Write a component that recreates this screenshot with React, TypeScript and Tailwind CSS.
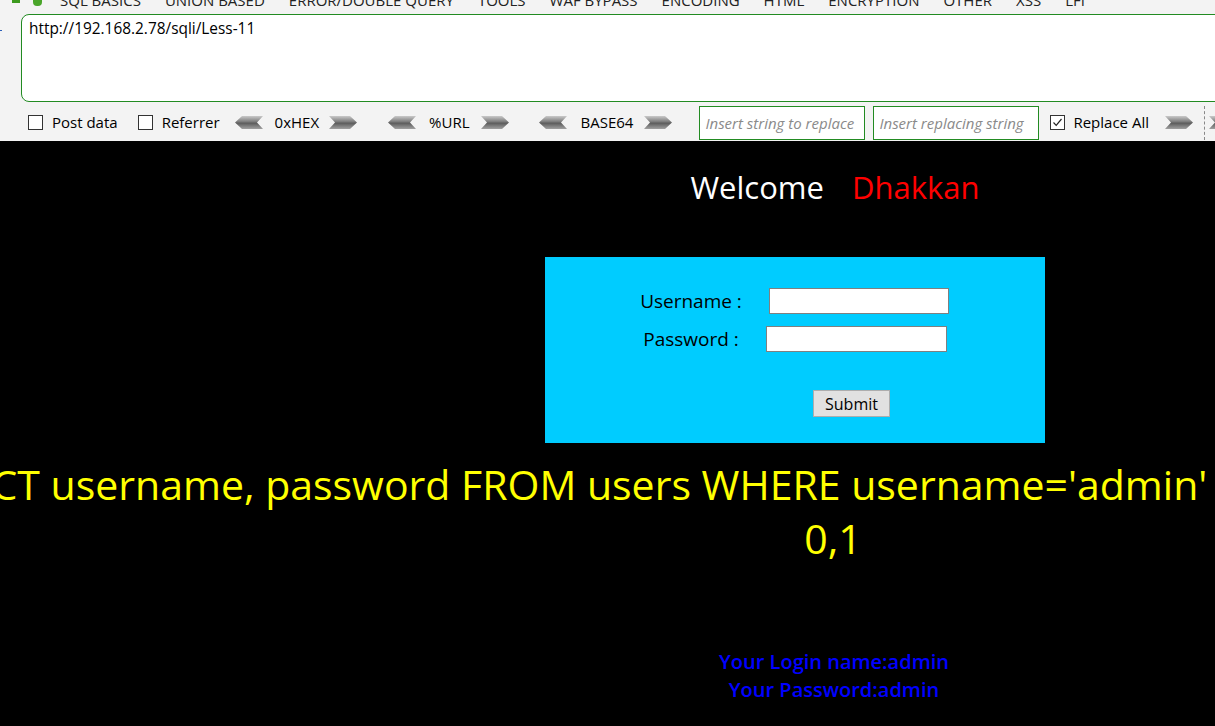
import React from "react";

const menu = [
  "SQL BASICS",
  "UNION BASED",
  "ERROR/DOUBLE QUERY",
  "TOOLS",
  "WAF BYPASS",
  "ENCODING",
  "HTML",
  "ENCRYPTION",
  "OTHER",
  "XSS",
  "LFI",
];

function Arrow({ dir }: { dir: "left" | "right" }) {
  const id = `g-${dir}`;
  const pts =
    dir === "left"
      ? "0,6.5 7,0 28,0 22,6.5 28,13 7,13"
      : "0,0 21,0 28,6.5 21,13 0,13 6,6.5";
  return (
    <svg width="28" height="13" viewBox="0 0 28 13" className="shrink-0">
      <defs>
        <linearGradient id={id} x1="0" y1="0" x2="0" y2="1">
          <stop offset="0" stopColor="#c9c9c9" />
          <stop offset="0.45" stopColor="#7a7a7a" />
          <stop offset="0.55" stopColor="#5c5c5c" />
          <stop offset="1" stopColor="#a0a0a0" />
        </linearGradient>
      </defs>
      <polygon points={pts} fill={`url(#${id})`} />
    </svg>
  );
}

function Check({ checked }: { checked?: boolean }) {
  return (
    <span className="w-[15px] h-[15px] border border-[#333] bg-white shrink-0 flex items-center justify-center">
      {checked && (
        <svg width="11" height="11" viewBox="0 0 11 11">
          <path d="M1.5 5.5 L4.2 8.3 L9.5 2" fill="none" stroke="#222" strokeWidth="1.2" />
        </svg>
      )}
    </span>
  );
}

export default function App() {
  return (
    <div className="w-[1215px] h-[726px] overflow-hidden bg-black flex flex-col font-['Open_Sans','Noto_Sans',sans-serif]">
      {/* HackBar toolbar */}
      <div className="h-[141px] shrink-0 bg-[#f3f3f3] flex flex-col overflow-hidden text-[15px] text-black">
        <div className="h-[14px] overflow-hidden flex relative">
          <span className="absolute left-[12px] top-0 w-[8px] h-[3px] bg-[#3c9a1e]" />
          <span className="absolute left-[33px] top-0 w-[9px] h-[6px] bg-[#4aa52a] rounded-b-[4px]" />
          <div className="flex gap-[24px] pl-[60px] -mt-[10px] leading-[20px] text-[#222] whitespace-nowrap">
            {menu.map((m) => (
              <span key={m}>{m}</span>
            ))}
          </div>
        </div>

        <div className="flex h-[88px]">
          <div className="w-[21px] shrink-0 pt-[16px]">
            <div className="w-[2px] h-[1px] bg-[#2b5fb8]" />
          </div>
          <div className="w-[1230px] shrink-0 h-[88px] bg-white border border-[#228b22] rounded-[8px] pl-[7px] pt-[4px] leading-[20px] text-[15.4px]">
            http://192.168.2.78/sqli/Less-11
          </div>
        </div>

        <div className="flex items-center h-[39px] pt-[2px] pl-[28px] whitespace-nowrap">
          <Check />
          <span className="ml-[9px]">Post data</span>
          <span className="ml-[20px]">
            <Check />
          </span>
          <span className="ml-[9px]">Referrer</span>
          <span className="ml-[15px] flex">
            <Arrow dir="left" />
          </span>
          <span className="ml-[12px]">0xHEX</span>
          <span className="ml-[10px] flex">
            <Arrow dir="right" />
          </span>
          <span className="ml-[31px] flex">
            <Arrow dir="left" />
          </span>
          <span className="ml-[13px]">%URL</span>
          <span className="ml-[11px] flex">
            <Arrow dir="right" />
          </span>
          <span className="ml-[30px] flex">
            <Arrow dir="left" />
          </span>
          <span className="ml-[14px]">BASE64</span>
          <span className="ml-[11px] flex">
            <Arrow dir="right" />
          </span>
          <input
            readOnly
            placeholder="Insert string to replace"
            className="ml-[27px] w-[166px] h-[34px] shrink-0 border border-[#228b22] bg-white px-[5px] italic text-[15px] placeholder:text-[#8a8a8a] outline-none"
          />
          <input
            readOnly
            placeholder="Insert replacing string"
            className="ml-[8px] w-[166px] h-[34px] shrink-0 border border-[#228b22] bg-white px-[5px] italic text-[15px] placeholder:text-[#8a8a8a] outline-none"
          />
          <span className="ml-[11px]">
            <Check checked />
          </span>
          <span className="ml-[8px]">Replace All</span>
          <span className="ml-[16px] flex">
            <Arrow dir="right" />
          </span>
          <span className="ml-[11px] w-0 h-[34px] border-l border-dashed border-[#888]" />
          <span className="ml-[4px] flex">
            <Arrow dir="right" />
          </span>
        </div>
      </div>

      {/* Page */}
      <div className="flex-1 bg-black flex flex-col">
        <div className="mt-[26px] ml-[452px] w-[766px] flex justify-center text-[31px] leading-[40px] whitespace-nowrap">
          <span className="text-white">Welcome</span>
          <span className="text-[#ff0000] ml-[28px]">Dhakkan</span>
        </div>

        <div className="mt-[50px] ml-[545px] w-[500px] h-[186px] bg-[#00ccff] flex flex-col text-[19px] text-black pt-[31px]">
          <div className="flex items-center h-[26px]">
            <span className="ml-[86px] w-[120px] text-center">Username :</span>
            <input readOnly className="ml-[18px] w-[180px] h-[26px] bg-white border border-[#808080] outline-none" />
          </div>
          <div className="flex items-center h-[26px] mt-[12px]">
            <span className="ml-[86px] w-[120px] text-center">Password :</span>
            <input readOnly className="ml-[15px] w-[181px] h-[26px] bg-white border border-[#808080] outline-none" />
          </div>
          <div className="flex mt-[38px]">
            <button className="ml-[268px] w-[77px] h-[27px] bg-[#e1e1e1] border border-[#adadad] text-[16px] leading-[20px] text-black">
              Submit
            </button>
          </div>
        </div>

        <div className="mt-[14px] ml-[452px] w-[762px] flex flex-col items-center text-[#ffff00] text-[41px] leading-[54px] whitespace-nowrap">
          <div className="flex justify-center w-full">
            <span>SELECT username, password FROM users WHERE username='admin' and password='admin' LIMIT</span>
          </div>
          <span>0,1</span>
        </div>

        <div className="mt-[83px] ml-[452px] w-[764px] flex flex-col items-center text-[#0000ff] text-[20px] font-semibold leading-[28px] whitespace-nowrap">
          <span>Your Login name:admin</span>
          <span>Your Password:admin</span>
        </div>
      </div>
    </div>
  );
}
